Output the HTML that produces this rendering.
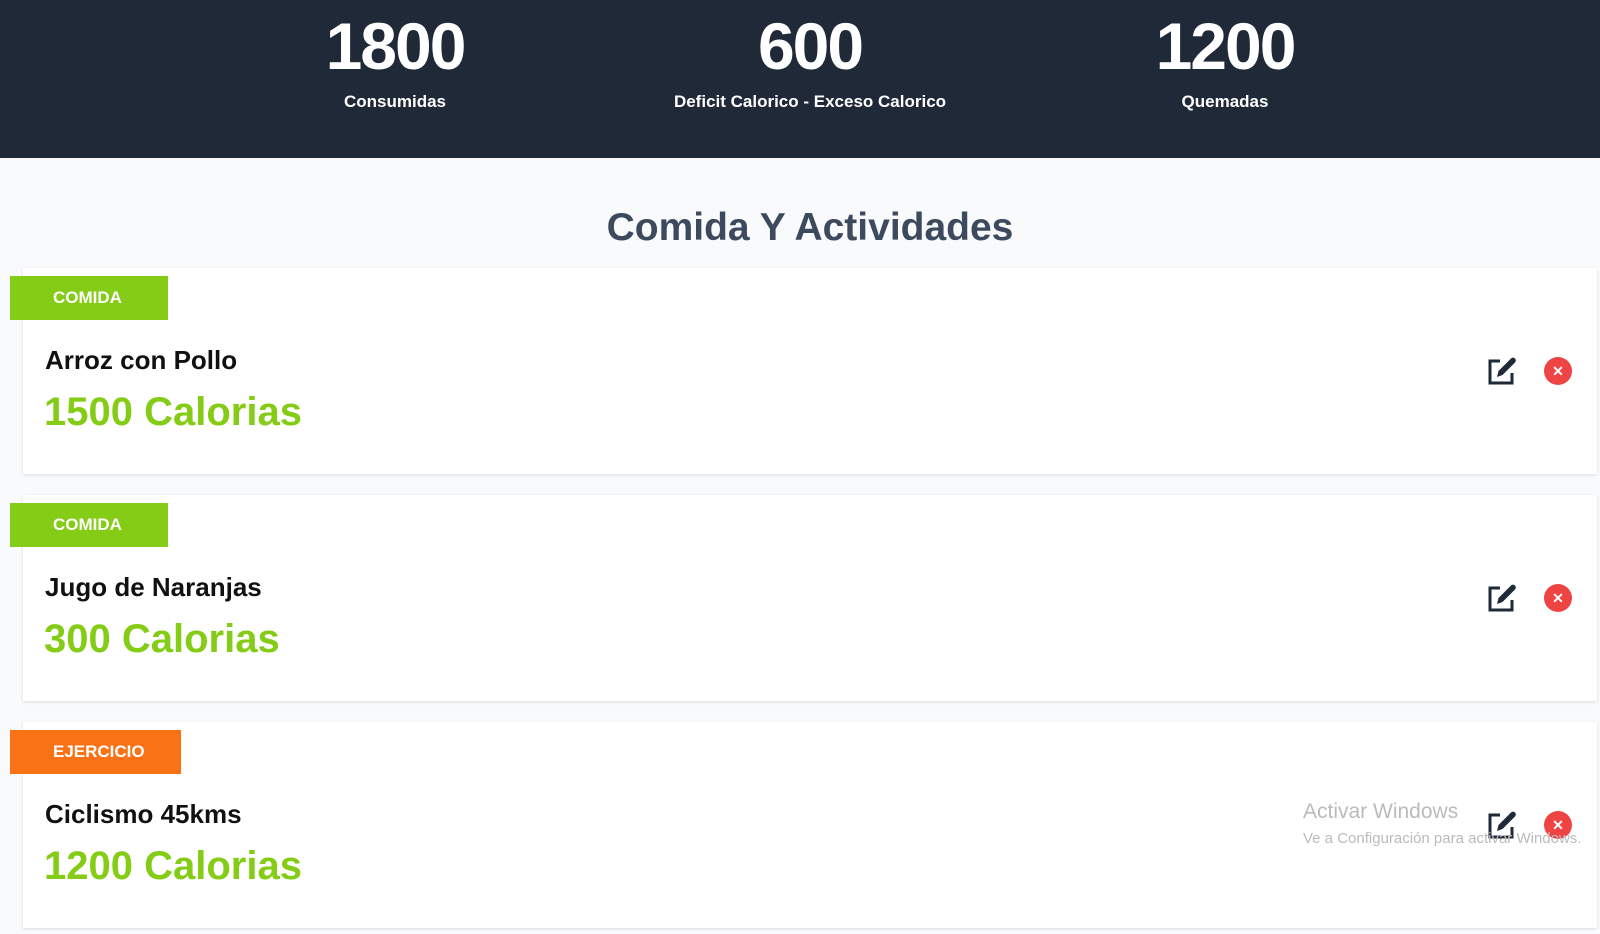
<!DOCTYPE html>
<html><head><meta charset="utf-8"><style>
*{margin:0;padding:0;box-sizing:border-box}
body{width:1600px;height:934px;background:#f8fafc;font-family:"Liberation Sans",sans-serif;position:relative;overflow:hidden}
.hdr{position:absolute;left:0;top:0;width:1600px;height:158px;background:#1f2937}
.st{position:absolute;top:8px;width:400px;margin-left:-200px;text-align:center;color:#fff;font-weight:900}
.st .n{font-size:66px;line-height:76px;letter-spacing:-2px}
.st .l{font-size:17px;font-weight:bold;margin-top:8px}
h1{position:absolute;top:206px;left:0;width:1620px;text-align:center;font-size:39px;color:#3d4a5e;font-weight:bold}
.card{position:absolute;left:23px;width:1574px;height:206px;background:#fff;box-shadow:0 1px 3px rgba(0,0,0,.12)}
.bd{position:absolute;left:-13px;top:8px;height:44px;color:#fff;font-weight:bold;font-size:17px;line-height:44px;padding-left:43px}
.nm{position:absolute;left:22px;top:77px;font-size:26px;font-weight:bold;color:#111}
.cal{position:absolute;left:21px;top:122px;font-size:40px;font-weight:bold;color:#84cc16}
.ed{position:absolute;left:1463px;top:87px}
.x{position:absolute;left:1521px;top:89px;width:28px;height:28px;border-radius:50%;background:#ef4444;color:#fff;font-size:14px;font-weight:bold;text-align:center;line-height:28px}
.wm{position:absolute;left:1303px;top:800px;color:#bbb;font-size:21px}
.wm2{position:absolute;left:1303px;top:830px;color:#bbb;font-size:15px}
</style></head><body>
<div class="hdr">
<div class="st" style="left:395px"><div class="n">1800</div><div class="l">Consumidas</div></div>
<div class="st" style="left:810px"><div class="n">600</div><div class="l">Deficit Calorico - Exceso Calorico</div></div>
<div class="st" style="left:1225px"><div class="n">1200</div><div class="l">Quemadas</div></div>
</div>
<h1>Comida Y Actividades</h1>

<div class="card" style="top:268px">
<div class="bd" style="background:#84cc16;width:158px">COMIDA</div>
<div class="nm">Arroz con Pollo</div><div class="cal">1500 Calorias</div>
<svg class="ed" width="32" height="32" viewBox="0 0 32 32"><path d="M14 6H4v22h22V18" fill="none" stroke="#1f2937" stroke-width="3"/><path d="M11 22l1.5-6L25 3.5a2.5 2.5 0 014 4L16.5 20z" fill="#1f2937"/></svg>
<div class="x">✕</div>
</div>

<div class="card" style="top:495px">
<div class="bd" style="background:#84cc16;width:158px">COMIDA</div>
<div class="nm">Jugo de Naranjas</div><div class="cal">300 Calorias</div>
<svg class="ed" width="32" height="32" viewBox="0 0 32 32"><path d="M14 6H4v22h22V18" fill="none" stroke="#1f2937" stroke-width="3"/><path d="M11 22l1.5-6L25 3.5a2.5 2.5 0 014 4L16.5 20z" fill="#1f2937"/></svg>
<div class="x">✕</div>
</div>

<div class="card" style="top:722px">
<div class="bd" style="background:#f97316;width:171px">EJERCICIO</div>
<div class="nm">Ciclismo 45kms</div><div class="cal">1200 Calorias</div>
<svg class="ed" width="32" height="32" viewBox="0 0 32 32"><path d="M14 6H4v22h22V18" fill="none" stroke="#1f2937" stroke-width="3"/><path d="M11 22l1.5-6L25 3.5a2.5 2.5 0 014 4L16.5 20z" fill="#1f2937"/></svg>
<div class="x">✕</div>
</div>
<div class="wm">Activar Windows</div>
<div class="wm2">Ve a Configuración para activar Windows.</div>
</body></html>
